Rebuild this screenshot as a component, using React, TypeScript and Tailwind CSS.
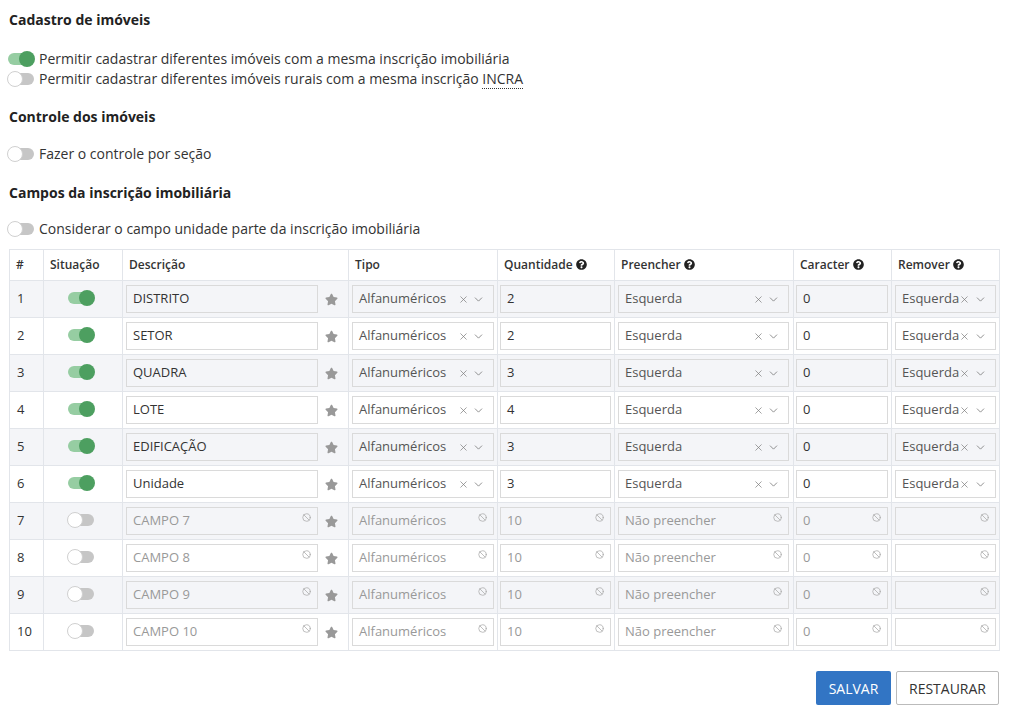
import React from "react";
import { FaQuestionCircle, FaStar } from "react-icons/fa";
import { X, ChevronDown, Ban } from "lucide-react";

function Toggle({ on }: { on: boolean }) {
  return (
    <span className="relative inline-flex items-center w-[28px] h-[16px] shrink-0">
      <span
        className={
          "absolute left-[1px] right-[1px] h-[12px] rounded-full " +
          (on ? "bg-[#96cda2]" : "bg-[#c6c6c6]")
        }
      />
      {on ? (
        <span className="absolute right-0 w-[16px] h-[16px] rounded-full bg-[#4d9f60]" />
      ) : (
        <span className="absolute left-0 w-[16px] h-[16px] rounded-full bg-white border border-[#d0d0d0]" />
      )}
    </span>
  );
}

function ToggleRow({ on, children }: { on: boolean; children: React.ReactNode }) {
  return (
    <div className="flex items-center gap-[4px] h-[19px] -ml-[2px]">
      <Toggle on={on} />
      <span className="text-[14px] text-[#333]">{children}</span>
    </div>
  );
}

function Help() {
  return <FaQuestionCircle className="inline-block ml-[3px] text-[#222] align-[-1px]" size={11} />;
}

function DisabledIcon() {
  return (
    <Ban className="absolute right-[6px] top-[5px] text-[#aaa]" size={9} strokeWidth={2} />
  );
}

function TextInput({ value, disabled }: { value: string; disabled: boolean }) {
  return (
    <div className="relative h-[28px] w-full border border-[#dadada] flex items-center pl-[6px]">
      <span className={"text-[13px] " + (disabled ? "text-[#999]" : "text-[#333]")}>{value}</span>
      {disabled && <DisabledIcon />}
    </div>
  );
}

function SelectInput({
  value,
  disabled,
  tight,
}: {
  value: string;
  disabled: boolean;
  tight?: boolean;
}) {
  return (
    <div className="relative h-[28px] w-full border border-[#dadada] flex items-center pl-[6px] pr-[8px] overflow-hidden">
      <span
        className={
          "text-[13px] whitespace-nowrap " +
          (disabled ? "text-[#999]" : "text-[#555]") +
          (tight ? "" : " flex-1")
        }
      >
        {value}
      </span>
      {disabled ? (
        <DisabledIcon />
      ) : (
        <span className={"flex items-center text-[#777] " + (tight ? "ml-0 flex-1 justify-between" : "")}>
          <X size={11} strokeWidth={1.5} />
          <ChevronDown size={13} strokeWidth={1.5} className={tight ? "" : "ml-[3px]"} />
        </span>
      )}
    </div>
  );
}

const rows = [
  { n: 1, desc: "DISTRITO", qtd: "2", on: true },
  { n: 2, desc: "SETOR", qtd: "2", on: true },
  { n: 3, desc: "QUADRA", qtd: "3", on: true },
  { n: 4, desc: "LOTE", qtd: "4", on: true },
  { n: 5, desc: "EDIFICAÇÃO", qtd: "3", on: true },
  { n: 6, desc: "Unidade", qtd: "3", on: true },
  { n: 7, desc: "CAMPO 7", qtd: "10", on: false },
  { n: 8, desc: "CAMPO 8", qtd: "10", on: false },
  { n: 9, desc: "CAMPO 9", qtd: "10", on: false },
  { n: 10, desc: "CAMPO 10", qtd: "10", on: false },
];

export default function App() {
  return (
    <div className="w-[1014px] h-[728px] bg-white font-['Open_Sans',sans-serif] text-[#333] pt-[10px] px-[9px]">
      <h2 className="text-[14px] font-bold text-[#222] h-[20px] leading-[20px] mb-[19px]">Cadastro de imóveis</h2>
      <div className="flex flex-col gap-[1px] mb-[19px]">
        <ToggleRow on={true}>Permitir cadastrar diferentes imóveis com a mesma inscrição imobiliária</ToggleRow>
        <ToggleRow on={false}>
          Permitir cadastrar diferentes imóveis rurais com a mesma inscrição{" "}
          <abbr className="no-underline border-b border-dotted border-[#333]">INCRA</abbr>
        </ToggleRow>
      </div>
      <h2 className="text-[14px] font-bold text-[#222] h-[20px] leading-[20px] mb-[17px]">Controle dos imóveis</h2>
      <div className="mb-[20px]">
        <ToggleRow on={false}>Fazer o controle por seção</ToggleRow>
      </div>
      <h2 className="text-[14px] font-bold text-[#222] h-[20px] leading-[20px] mb-[16px]">Campos da inscrição imobiliária</h2>
      <div className="mb-[11px]">
        <ToggleRow on={false}>Considerar o campo unidade parte da inscrição imobiliária</ToggleRow>
      </div>

      <table className="border-collapse table-fixed w-[990px] text-[13px]">
        <colgroup>
          <col className="w-[34px]" />
          <col className="w-[79px]" />
          <col className="w-[226px]" />
          <col className="w-[149px]" />
          <col className="w-[117px]" />
          <col className="w-[179px]" />
          <col className="w-[98px]" />
          <col className="w-[108px]" />
        </colgroup>
        <thead>
          <tr className="h-[31px] text-[12px] font-semibold text-[#333] text-left">
            <th className="border border-[#e2e5ea] px-[6px] font-semibold">#</th>
            <th className="border border-[#e2e5ea] px-[6px] font-semibold">Situação</th>
            <th className="border border-[#e2e5ea] px-[6px] font-semibold">Descrição</th>
            <th className="border border-[#e2e5ea] px-[6px] font-semibold">Tipo</th>
            <th className="border border-[#e2e5ea] px-[6px] font-semibold">
              Quantidade<Help />
            </th>
            <th className="border border-[#e2e5ea] px-[6px] font-semibold">
              Preencher<Help />
            </th>
            <th className="border border-[#e2e5ea] px-[6px] font-semibold">
              Caracter<Help />
            </th>
            <th className="border border-[#e2e5ea] px-[6px] font-semibold">
              Remover<Help />
            </th>
          </tr>
        </thead>
        <tbody>
          {rows.map((r) => {
            const dis = !r.on;
            return (
              <tr key={r.n} className={"h-[37px] " + (r.n % 2 === 1 ? "bg-[#f4f5f8]" : "bg-white")}>
                <td className="border border-[#e2e5ea] px-[7px] text-[13px] text-[#333]">{r.n}</td>
                <td className="border border-[#e2e5ea]">
                  <div className="flex justify-center pr-[4px] -mt-[3px]">
                    <Toggle on={r.on} />
                  </div>
                </td>
                <td className="border border-[#e2e5ea] pl-[3px] pr-0">
                  <div className="flex items-center">
                    <div className="w-[192px]">
                      <TextInput value={r.desc} disabled={dis} />
                    </div>
                    <div className="flex-1 flex justify-center pr-[4px]">
                      <FaStar size={13} className="text-[#999]" />
                    </div>
                  </div>
                </td>
                <td className="border border-[#e2e5ea] pl-[3px] pr-[3px]">
                  <SelectInput value="Alfanuméricos" disabled={dis} />
                </td>
                <td className="border border-[#e2e5ea] pl-[2px] pr-[3px]">
                  <TextInput value={r.qtd} disabled={dis} />
                </td>
                <td className="border border-[#e2e5ea] pl-[3px] pr-[4px]">
                  <SelectInput value={dis ? "Não preencher" : "Esquerda"} disabled={dis} />
                </td>
                <td className="border border-[#e2e5ea] pl-[2px] pr-[3px]">
                  <TextInput value="0" disabled={dis} />
                </td>
                <td className="border border-[#e2e5ea] pl-[3px] pr-[3px]">
                  <SelectInput value={dis ? "" : "Esquerda"} disabled={dis} tight />
                </td>
              </tr>
            );
          })}
        </tbody>
      </table>

      <div className="flex justify-end gap-[5px] mt-[20px] w-[990px]">
        <button className="h-[34px] w-[75px] bg-[#3275c4] text-white text-[14px] rounded-[2px]">SALVAR</button>
        <button className="h-[34px] w-[103px] bg-white border border-[#bbb] text-[#333] text-[14px] rounded-[2px]">
          RESTAURAR
        </button>
      </div>
    </div>
  );
}
